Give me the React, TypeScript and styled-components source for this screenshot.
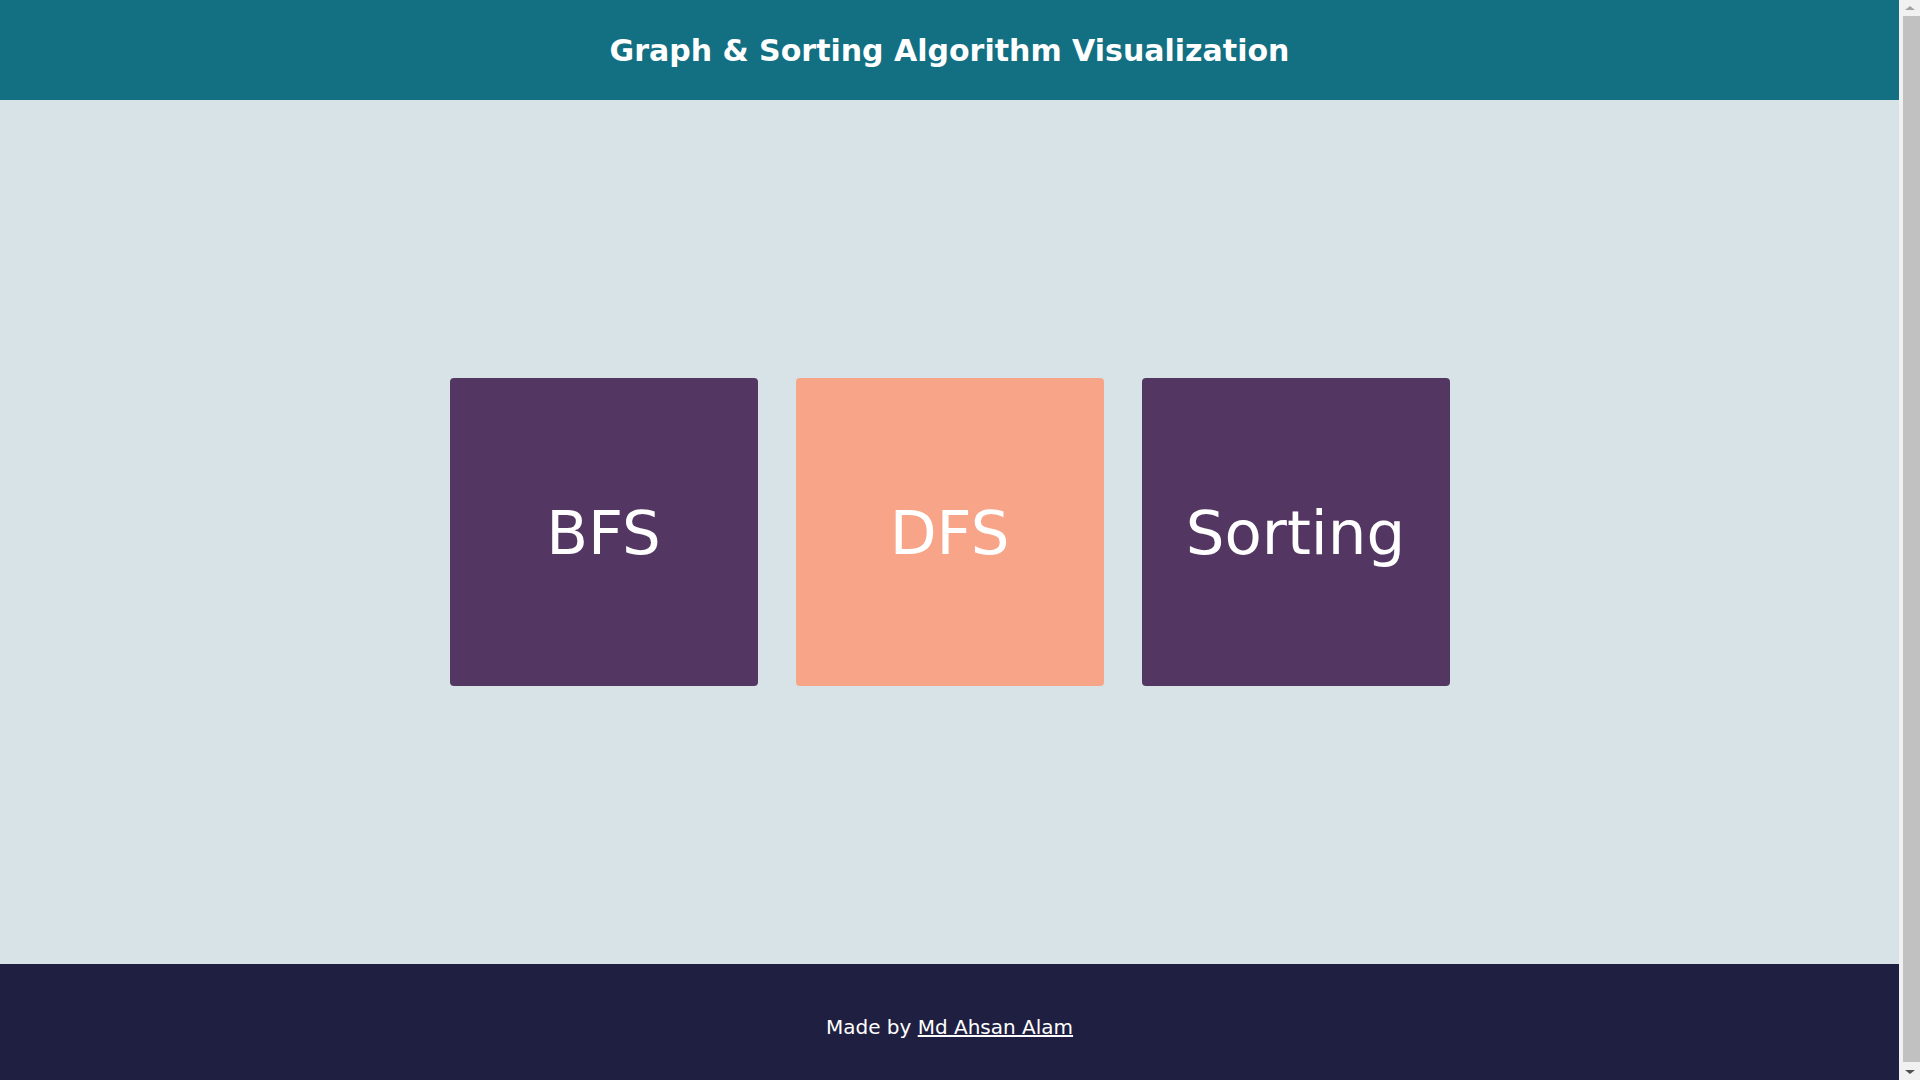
import { createGlobalStyle, styled } from 'styled-components';

const GlobalStyle = createGlobalStyle`
  body {
    margin: 0;
    padding-right: 21px;
    font-family: 'DejaVu Sans', Verdana, sans-serif;
    background: #d8e3e8;
  }
`;

const Header = styled.header`
  display: flex;
  align-items: center;
  justify-content: center;
  height: 100px;
  background: #136f82;
`;

const Title = styled.h1`
  margin: 0;
  color: #fff;
  font-size: 30px;
  font-weight: bold;
`;

const Main = styled.main`
  display: flex;
  align-items: center;
  justify-content: center;
  gap: 38px;
  height: 864px;
`;

const Tile = styled.a<{ $tone: 'purple' | 'peach' }>`
  display: flex;
  align-items: center;
  justify-content: center;
  width: 308px;
  height: 308px;
  border-radius: 4px;
  background: ${(p) => (p.$tone === 'peach' ? '#f7a488' : '#533762')};
  color: #fff;
  font-size: 61px;
  text-decoration: none;
  cursor: pointer;
`;

const Footer = styled.footer`
  padding: 52px 0 60px;
  background: #1f2041;
  color: #fff;
  text-align: center;
  font-size: 20px;
  line-height: 23px;
`;

const AuthorLink = styled.a`
  color: #fff;
  text-decoration: underline;
`;

// window scrollbar as seen in the capture
const ScrollRail = styled.div`
  position: fixed;
  top: 0;
  right: 0;
  bottom: 0;
  width: 21px;
  display: flex;
  flex-direction: column;
  align-items: center;
  background: #f1f1f1;
`;

const RailArrow = styled.div<{ $down?: boolean }>`
  width: 0;
  height: 0;
  margin: 6px 0;
  border-left: 5px solid transparent;
  border-right: 5px solid transparent;
  ${(p) =>
    p.$down
      ? 'border-top: 4px solid #505050;'
      : 'border-bottom: 4px solid #a3a3a3;'}
`;

const RailThumb = styled.div`
  flex: 1;
  width: 17px;
  margin: 0 0 2px 4px;
  background: #c1c1c1;
`;

const tiles: { label: string; tone: 'purple' | 'peach' }[] = [
  { label: 'BFS', tone: 'purple' },
  { label: 'DFS', tone: 'peach' },
  { label: 'Sorting', tone: 'purple' },
];

export default function App() {
  return (
    <>
      <GlobalStyle />
      <Header>
        <Title>Graph &amp; Sorting Algorithm Visualization</Title>
      </Header>
      <Main>
        {tiles.map((t) => (
          <Tile key={t.label} $tone={t.tone}>
            {t.label}
          </Tile>
        ))}
      </Main>
      <Footer>
        Made by <AuthorLink href="#">Md Ahsan Alam</AuthorLink>
      </Footer>
      <ScrollRail>
        <RailArrow />
        <RailThumb />
        <RailArrow $down />
      </ScrollRail>
    </>
  );
}
